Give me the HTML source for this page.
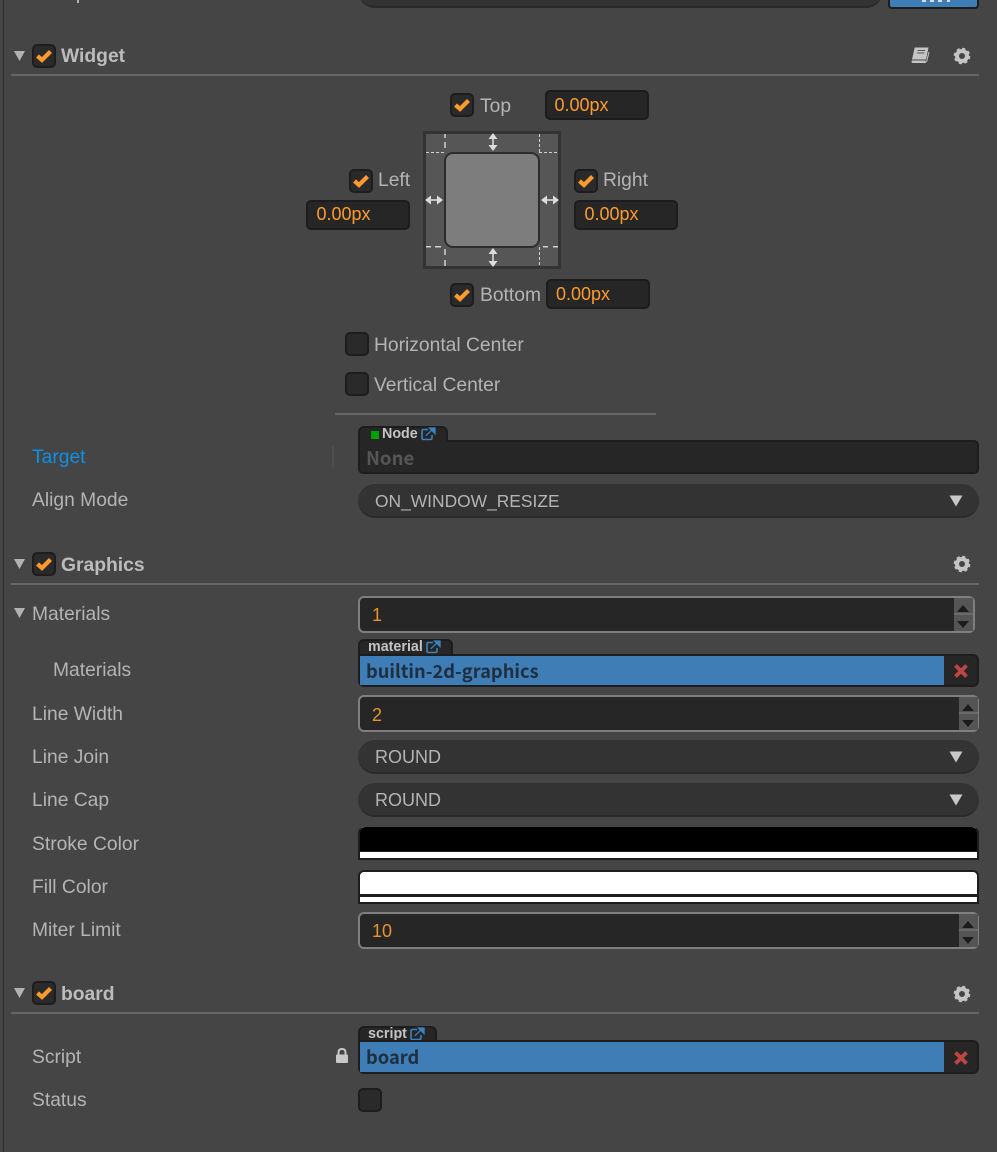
<!DOCTYPE html>
<html>
<head>
<meta charset="utf-8">
<style>
html,body{margin:0;padding:0;background:#454545;}
#p{position:relative;width:997px;height:1152px;overflow:hidden;background:#454545;font-family:"Liberation Sans",sans-serif;font-size:19.25px;color:#b4b4b4;}
#p div,#p span,#p svg{position:absolute;box-sizing:border-box;}
.t{line-height:24px;height:24px;white-space:nowrap;}
.h{font-weight:bold;font-size:19.3px;color:#bcbcbc;}
.line{left:11px;width:968px;height:2px;background:#666;}
.cb{width:24px;height:24px;background:#2a2a2a;border:2px solid #1d1d1d;border-radius:5px;}
.cb svg{left:-2px;top:-2px;}
.in{width:104px;height:30px;background:#262626;border:2px solid #1c1c1c;border-radius:5px;color:#ff9a2e;line-height:25px;padding-left:8.5px;font-size:18px;}
.pill{left:358px;width:621px;height:34px;background:#333;border-bottom:2px solid #2a2a2a;border-radius:17px;line-height:35px;padding-left:17px;font-size:18px;color:#b4b4b4;}
.pill svg{left:591px;top:11px;}
.num{left:358px;background:#262626;border:2px solid #7f7f7f;border-radius:6px;color:#e8932e;line-height:35px;padding-left:12px;font-size:18px;}
.spin{top:0;bottom:0;width:19px;background:#555;}
.tab{left:358px;background:#262626;border:2px solid #1d1d1d;border-bottom:none;border-radius:6px 6px 0 0;}
.tl{font-weight:bold;font-size:14.3px;color:#c4c4c4;line-height:14px;height:14px;white-space:nowrap;}
.blue{left:358px;width:621px;background:#262626;border:2px solid #1d1d1d;border-radius:0 6px 6px 6px;}
.bf{left:0;top:0;bottom:0;width:584px;background:#3e7db5;color:#1f2f3f;font-family:"Noto Sans CJK SC","Liberation Sans",sans-serif;font-weight:bold;font-size:18.3px;line-height:31px;padding-left:6px;white-space:nowrap;}
.clr{left:358px;width:621px;background:#fff;border:2px solid #1d1d1d;border-top:none;border-radius:6px 6px 0 0;}
</style>
</head>
<body>
<div id="p">
<svg width="0" height="0" style="left:0;top:0">
<defs>
<symbol id="chk" viewBox="0 0 24 24"><path d="M5.500 12L10 16L18.500 7.500" fill="none" stroke="#ff9a2e" stroke-width="4.200"/></symbol>
<symbol id="gear" viewBox="0 0 18 18"><circle cx="9" cy="9" r="5" fill="none" stroke="#c4c4c4" stroke-width="4"/><circle cx="9" cy="9" r="7.200" fill="none" stroke="#c4c4c4" stroke-width="2.200" stroke-dasharray="3.100 2.550"/></symbol>
<symbol id="ext" viewBox="0 0 15 14"><path d="M7 2.500H2.500Q1 2.500 1 4V11Q1 12.500 2.500 12.500H9.500Q11 12.500 11 11V8" fill="none" stroke="#3c82bf" stroke-width="1.600"/><path d="M4.800 8.800L11 2.800M8.500 1H14V6.500Z" fill="#3c82bf" stroke="#3c82bf" stroke-width="1.300"/></symbol>
<symbol id="dn" viewBox="0 0 14 12"><path d="M0.500 0.500H13.500L7 11.500Z" fill="#c8c8c8"/></symbol>
<symbol id="tri" viewBox="0 0 11 10"><path d="M0 0H11L5.500 10Z" fill="#b2b2b2"/></symbol>
</defs>
</svg>

<div style="left:3px;top:0;width:1px;height:1152px;background:#2c2c2c"></div>

<!-- top cut-off row -->
<div style="left:358px;top:-26px;width:525px;height:34px;background:#333;border-bottom:2px solid #2a2a2a;border-radius:17px"></div>
<div style="left:888px;top:-20px;width:91px;height:29px;background:#3e7db5;border:2px solid #1d1d1d;border-radius:4px"></div>
<div style="left:922px;top:0;width:4px;height:2px;background:#ddd"></div>
<div style="left:930px;top:0;width:4px;height:2px;background:#ddd"></div>
<div style="left:938px;top:0;width:4px;height:2px;background:#ddd"></div>
<div style="left:947px;top:0;width:3px;height:2px;background:#ddd"></div>
<div style="left:77px;top:0;width:2px;height:3px;background:#b4b4b4"></div>

<!-- Widget header -->
<svg style="left:14px;top:51px" width="11" height="10"><use href="#tri"/></svg>
<div class="cb" style="left:32px;top:44px"><svg width="24" height="24"><use href="#chk"/></svg></div>
<div class="t h" style="left:61px;top:45px">Widget</div>
<svg style="left:911px;top:47px" width="19" height="17" viewBox="0 0 19 17"><path d="M3.700 0.500H17.500L15 12.500H1Z" fill="#c6c6c6"/><path d="M1 13.500H14.500L15 16H2Q0.500 16 0.500 14.500Z" fill="#c6c6c6"/><path d="M15.500 15L18 5" stroke="#c6c6c6" stroke-width="1"/><path d="M6.500 3.500H14M6 6H13.500" stroke="#5a5a5a" stroke-width="1"/></svg>
<svg style="left:953px;top:47px" width="18" height="18"><use href="#gear"/></svg>
<div class="line" style="top:74px"></div>

<!-- Widget editor -->
<div class="cb" style="left:450px;top:93px"><svg width="24" height="24"><use href="#chk"/></svg></div>
<div class="t" style="left:480px;top:95px">Top</div>
<div class="in" style="left:545px;top:90px;line-height:27px;padding-left:7.500px">0.00px</div>

<div class="cb" style="left:349px;top:169px"><svg width="24" height="24"><use href="#chk"/></svg></div>
<div class="t" style="left:378px;top:169px">Left</div>
<div class="in" style="left:306px;top:200px">0.00px</div>

<div class="cb" style="left:574px;top:169px"><svg width="24" height="24"><use href="#chk"/></svg></div>
<div class="t" style="left:603px;top:169px">Right</div>
<div class="in" style="left:574px;top:200px">0.00px</div>

<svg style="left:423px;top:131px" width="138" height="138" viewBox="0 0 138 138">
<rect x="1.500" y="1.500" width="135" height="135" fill="#565656" stroke="#333" stroke-width="3"/>
<g stroke="#d0d0d0" fill="none" stroke-width="1.500">
<path d="M22 3V7M22 11V17M22 118V124M22 129V135"/>
<path d="M3 115.700H8M12 115.700H18M120 115.700H125M130 115.700H135"/>
</g>
<g stroke="#d0d0d0" fill="none" stroke-width="1" stroke-dasharray="3 2">
<path d="M116.500 3V22M116.500 116V135"/>
<path d="M3 21.500H22M116 21.500H135"/>
</g>
<rect x="22" y="22" width="94" height="94" rx="8" fill="#7d7d7d" stroke="#2d2d2d" stroke-width="2"/>
<g fill="#dcdcdc" stroke="none">
<path d="M70 2L74.500 8H65.500ZM70 20L74.500 14H65.500Z"/>
<path d="M70 117L74.500 123H65.500ZM70 136L74.500 130H65.500Z"/>
<path d="M2 69L8 64.500V73.500ZM20 69L14 64.500V73.500Z"/>
<path d="M118 69L124 64.500V73.500ZM136 69L130 64.500V73.500Z"/>
</g>
<g stroke="#e4e4e4" stroke-width="1.500"><path d="M70 8V15M70 123V130M8 69H14M124 69H130"/></g>
</svg>

<div class="cb" style="left:450px;top:283px"><svg width="24" height="24"><use href="#chk"/></svg></div>
<div class="t" style="left:480px;top:284px">Bottom</div>
<div class="in" style="left:546px;top:279px;line-height:27px;padding-left:8px">0.00px</div>

<div class="cb" style="left:345px;top:332px"></div>
<div class="t" style="left:374px;top:334px">Horizontal Center</div>
<div class="cb" style="left:345px;top:372px"></div>
<div class="t" style="left:374px;top:374px">Vertical Center</div>
<div style="left:335px;top:413px;width:321px;height:2px;background:#666"></div>

<!-- Target -->
<div class="t" style="left:32px;top:446px;color:#0f8fe6">Target</div>
<div style="left:332px;top:446px;width:2px;height:22px;background:#4e4e4e"></div>
<div class="tab" style="top:426px;width:90px;height:17px"></div>
<div style="left:358px;top:440px;width:621px;height:34px;background:#262626;border:2px solid #1d1d1d;border-radius:0 5px 5px 5px"></div>
<div style="left:360px;top:438px;width:86px;height:4px;background:#262626"></div>
<div style="left:371px;top:431px;width:8px;height:8px;background:#00a000"></div>
<div class="tl" style="left:382px;top:427px">Node</div>
<svg style="left:421px;top:427px" width="15" height="14"><use href="#ext"/></svg>
<div class="t" style="left:366px;top:446px;color:#555;font-weight:bold;font-size:18.600px;font-family:'Noto Sans CJK SC','Liberation Sans',sans-serif">None</div>

<div class="t" style="left:32px;top:489px">Align Mode</div>
<div class="pill" style="top:484px;font-size:17.400px">ON_WINDOW_RESIZE<svg width="14" height="12" viewBox="0 0 14 12"><use href="#dn"/></svg></div>

<!-- Graphics -->
<svg style="left:14px;top:559px" width="11" height="10"><use href="#tri"/></svg>
<div class="cb" style="left:32px;top:552px"><svg width="24" height="24"><use href="#chk"/></svg></div>
<div class="t h" style="left:61px;top:554px">Graphics</div>
<svg style="left:953px;top:555px" width="18" height="18"><use href="#gear"/></svg>
<div class="line" style="top:583px"></div>

<svg style="left:14px;top:608px" width="11" height="10"><use href="#tri"/></svg>
<div class="t" style="left:32px;top:603px">Materials</div>
<div class="num" style="top:596px;width:617px;height:37px">1
  <div class="spin" style="left:594px"><svg style="left:3px;top:7px" width="12" height="7" viewBox="0 0 12 7"><path d="M6 0L12 7H0Z" fill="#1c1c1c"/></svg><div style="left:0;top:15px;width:19px;height:2px;background:#6a6a6a"></div><svg style="left:3px;top:23px" width="12" height="7" viewBox="0 0 12 7"><path d="M6 7L12 0H0Z" fill="#1c1c1c"/></svg></div>
</div>

<div class="t" style="left:53px;top:659px">Materials</div>
<div class="tab" style="top:639px;width:95px;height:17px"></div>
<div class="tl" style="left:368px;top:640px">material</div>
<svg style="left:426px;top:640px" width="15" height="14"><use href="#ext"/></svg>
<div class="blue" style="top:654px;height:33px"><div class="bf">builtin-2d-graphics</div>
<svg style="left:593px;top:7px" width="16" height="16" viewBox="0 0 16 16"><path d="M2.500 2.500L13.500 13.500M13.500 2.500L2.500 13.500" stroke="#bf4545" stroke-width="3.800"/></svg></div>

<div class="t" style="left:32px;top:703px">Line Width</div>
<div class="num" style="top:695px;width:621px;height:37px;line-height:37px">2
  <div class="spin" style="left:599px"><svg style="left:3px;top:7px" width="12" height="7" viewBox="0 0 12 7"><path d="M6 0L12 7H0Z" fill="#1c1c1c"/></svg><div style="left:0;top:15px;width:19px;height:2px;background:#6a6a6a"></div><svg style="left:3px;top:23px" width="12" height="7" viewBox="0 0 12 7"><path d="M6 7L12 0H0Z" fill="#1c1c1c"/></svg></div>
</div>

<div class="t" style="left:32px;top:746px">Line Join</div>
<div class="pill" style="top:740px">ROUND<svg width="14" height="12" viewBox="0 0 14 12"><use href="#dn"/></svg></div>
<div class="t" style="left:32px;top:789px">Line Cap</div>
<div class="pill" style="top:783px">ROUND<svg width="14" height="12" viewBox="0 0 14 12"><use href="#dn"/></svg></div>

<div class="t" style="left:32px;top:833px">Stroke Color</div>
<div class="clr" style="top:827px;height:33px"><div style="left:0;top:0;right:0;height:24px;background:#000;border-radius:5px 5px 0 0"></div><div style="left:0;top:24px;right:0;height:1px;background:#1d1d1d"></div></div>
<div class="t" style="left:32px;top:876px">Fill Color</div>
<div class="clr" style="top:870px;height:34px;border-top:2px solid #1d1d1d"><div style="left:0;top:22px;right:0;height:3px;background:#1d1d1d"></div></div>

<div class="t" style="left:32px;top:919px">Miter Limit</div>
<div class="num" style="top:912px;width:621px;height:37px">10
  <div class="spin" style="left:599px"><svg style="left:3px;top:7px" width="12" height="7" viewBox="0 0 12 7"><path d="M6 0L12 7H0Z" fill="#1c1c1c"/></svg><div style="left:0;top:15px;width:19px;height:2px;background:#6a6a6a"></div><svg style="left:3px;top:23px" width="12" height="7" viewBox="0 0 12 7"><path d="M6 7L12 0H0Z" fill="#1c1c1c"/></svg></div>
</div>

<!-- board -->
<svg style="left:14px;top:988px" width="11" height="10"><use href="#tri"/></svg>
<div class="cb" style="left:32px;top:981px"><svg width="24" height="24"><use href="#chk"/></svg></div>
<div class="t h" style="left:61px;top:983px">board</div>
<svg style="left:953px;top:985px" width="18" height="18"><use href="#gear"/></svg>
<div class="line" style="top:1012px"></div>

<div class="t" style="left:32px;top:1046px">Script</div>
<svg style="left:335px;top:1048px" width="14" height="15" viewBox="0 0 14 15"><path d="M3.500 7V4.500Q3.500 1 7 1Q10.500 1 10.500 4.500V7" fill="none" stroke="#c8c8c8" stroke-width="2"/><rect x="1" y="6.500" width="12" height="8.500" rx="1" fill="#c8c8c8"/></svg>
<div class="tab" style="top:1026px;width:79px;height:16px"></div>
<div class="tl" style="left:368px;top:1027px">script</div>
<svg style="left:410px;top:1027px" width="15" height="14"><use href="#ext"/></svg>
<div class="blue" style="top:1040px;height:34px"><div class="bf" style="line-height:31px">board</div>
<svg style="left:593px;top:8px" width="16" height="16" viewBox="0 0 16 16"><path d="M2.500 2.500L13.500 13.500M13.500 2.500L2.500 13.500" stroke="#bf4545" stroke-width="3.800"/></svg></div>

<div class="t" style="left:32px;top:1089px">Status</div>
<div class="cb" style="left:358px;top:1088px"></div>
</div>
</body>
</html>
